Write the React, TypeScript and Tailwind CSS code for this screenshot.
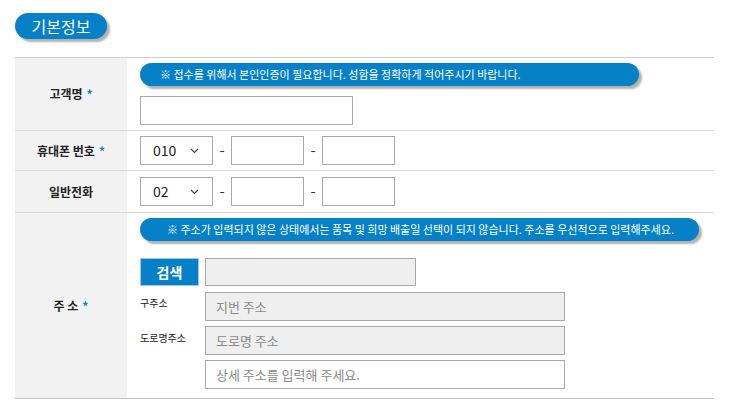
import React from "react";

const font = { fontFamily: '"Noto Sans CJK KR", "Noto Sans", sans-serif' };

function Label({ children }: { children: React.ReactNode }) {
  return (
    <div className="w-[112px] shrink-0 bg-[#f2f2f2] flex items-center justify-center text-[12px] font-bold text-[#222]">
      {children}
    </div>
  );
}

function Star() {
  return <span className="text-[#0a82c8] ml-[4px]">*</span>;
}

function Notice({ text, width, pad }: { text: string; width: string; pad: string }) {
  return (
    <div
      className={`${width} ${pad} h-[23px] rounded-full bg-[#0681c7] text-white text-[11px] flex items-center shadow-[3px_3px_2px_rgba(0,0,0,0.3)]`}
    >
      {text}
    </div>
  );
}

function Chevron() {
  return (
    <svg width="9" height="6" viewBox="0 0 9 6" className="text-[#444]">
      <path d="M1 1l3.5 3.5L8 1" fill="none" stroke="currentColor" strokeWidth="1.2" />
    </svg>
  );
}

function Dash() {
  return (
    <div className="w-[18px] flex justify-center text-[15px] text-[#333]">-</div>
  );
}

function PhoneRow({ value }: { value: string }) {
  return (
    <div className="flex items-center">
      <div className="w-[73px] h-[29px] border border-[#a8a8a8] bg-white flex items-center justify-between pl-[12px] pr-[13px] text-[14px] text-[#222]">
        <span>{value}</span>
        <Chevron />
      </div>
      <Dash />
      <div className="w-[73px] h-[29px] border border-[#a8a8a8] bg-white" />
      <Dash />
      <div className="w-[73px] h-[29px] border border-[#a8a8a8] bg-white" />
    </div>
  );
}

export default function App() {
  return (
    <div className="w-[741px] h-[412px] bg-white pt-[13px]" style={font}>
      <div className="ml-[15px] w-[92px] h-[26px] rounded-full bg-[#0681c7] text-white text-[16px] flex items-center justify-center shadow-[3px_3px_2px_rgba(0,0,0,0.3)]">
        기본정보
      </div>

      <div className="ml-[15px] mt-[18px] w-[699px] border-t border-[#cfcfcf] border-b border-b-[#c4c4c4]">
        {/* Row 1 */}
        <div className="flex h-[73px] border-b border-[#d8d8d8]">
          <Label>
            고객명<Star />
          </Label>
          <div className="pl-[13px] pt-[5px] flex flex-col">
            <Notice
              width="w-[499px]"
              pad="pl-[20px]"
              text="※ 접수를 위해서 본인인증이 필요합니다. 성함을 정확하게 적어주시기 바랍니다."
            />
            <div className="mt-[10px] w-[213px] h-[29px] border border-[#a8a8a8] bg-white" />
          </div>
        </div>

        {/* Row 2 */}
        <div className="flex h-[40px] border-b border-[#d8d8d8]">
          <Label>
            휴대폰 번호<Star />
          </Label>
          <div className="pl-[13px] flex items-center">
            <PhoneRow value="010" />
          </div>
        </div>

        {/* Row 3 */}
        <div className="flex h-[42px] border-b border-[#d8d8d8]">
          <Label>일반전화</Label>
          <div className="pl-[13px] flex items-center">
            <PhoneRow value="02" />
          </div>
        </div>

        {/* Row 4 */}
        <div className="flex h-[185px]">
          <Label>
            주 소<Star />
          </Label>
          <div className="pl-[13px] pt-[5px] flex flex-col">
            <Notice
              width="w-[559px]"
              pad="pl-[27px]"
              text="※ 주소가 입력되지 않은 상태에서는 품목 및 희망 배출일 선택이 되지 않습니다. 주소를 우선적으로 입력해주세요."
            />
            <div className="mt-[17px] flex items-center gap-[6px]">
              <div className="w-[59px] h-[28px] bg-[#0681c7] border border-[#9fc6e2] text-white font-bold text-[14px] flex items-center justify-center">
                검색
              </div>
              <div className="w-[211px] h-[28px] border border-[#a8a8a8] bg-[#efefef]" />
            </div>
            <div className="mt-[6px] flex">
              <div className="w-[65px] text-[10px] text-[#222] pt-[3px]">구주소</div>
              <div className="w-[360px] h-[29px] border border-[#a8a8a8] bg-[#efefef] flex items-center pl-[10px] text-[13px] text-[#8a8a8a]">
                지번 주소
              </div>
            </div>
            <div className="mt-[5px] flex">
              <div className="w-[65px] text-[10px] text-[#222] pt-[4px]">도로명주소</div>
              <div className="w-[360px] h-[29px] border border-[#a8a8a8] bg-[#efefef] flex items-center pl-[10px] text-[13px] text-[#8a8a8a]">
                도로명 주소
              </div>
            </div>
            <div className="mt-[5px] flex">
              <div className="w-[65px]" />
              <div className="w-[360px] h-[29px] border border-[#a8a8a8] bg-white flex items-center pl-[10px] text-[13px] text-[#8a8a8a]">
                상세 주소를 입력해 주세요.
              </div>
            </div>
          </div>
        </div>
      </div>
    </div>
  );
}
